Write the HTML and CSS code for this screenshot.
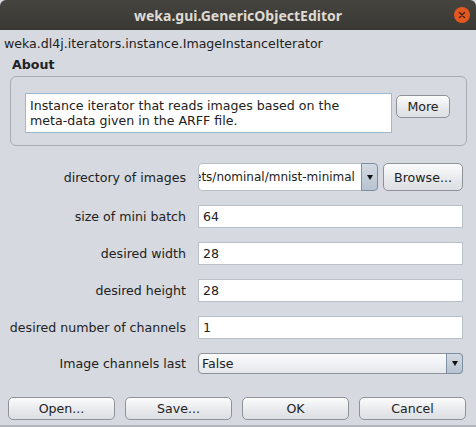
FILE: index.html
```html
<!DOCTYPE html>
<html lang="en">

<head>
    <meta charset="UTF-8">
    <title>weka.gui.GenericObjectEditor</title>
    <link rel="stylesheet" href="styles.css">
</head>

<body>
    <div class="editor-window">
        <div class="title-bar">
            <span class="title-text">weka.gui.GenericObjectEditor</span>
            <span class="close-button">
                <svg width="16" height="16" viewBox="0 0 16 16">
                    <circle cx="8" cy="8" r="8" fill="#e4561f"/>
                    <path d="M5.5 5.5 L10.5 10.5 M10.5 5.5 L5.5 10.5" stroke="#3a2218" stroke-width="1.3" stroke-linecap="round"/>
                </svg>
            </span>
        </div>

        <div class="class-name">weka.dl4j.iterators.instance.ImageInstanceIterator</div>

        <div class="about-title">About</div>
        <div class="about-panel">
            <div class="about-text">Instance iterator that reads images based on the<br>meta-data given in the ARFF file.</div>
            <button class="swing-button more-button">More</button>
        </div>

        <div class="property-grid">
            <span class="prop-label">directory of images</span>
            <div class="file-row">
                <div class="combo combo-path">
                    <span class="combo-value path-value">ets/nominal/mnist-minimal</span>
                    <span class="combo-arrow"><span class="arrow-glyph"></span></span>
                </div>
                <button class="swing-button browse-button">Browse...</button>
            </div>

            <span class="prop-label">size of mini batch</span>
            <div class="text-field">64</div>

            <span class="prop-label">desired width</span>
            <div class="text-field">28</div>

            <span class="prop-label">desired height</span>
            <div class="text-field">28</div>

            <span class="prop-label">desired number of channels</span>
            <div class="text-field">1</div>

            <span class="prop-label">Image channels last</span>
            <div class="combo combo-select">
                <span class="combo-value">False</span>
                <span class="combo-arrow"><span class="arrow-glyph"></span></span>
            </div>
        </div>

        <div class="button-bar">
            <button class="swing-button">Open...</button>
            <button class="swing-button">Save...</button>
            <button class="swing-button">OK</button>
            <button class="swing-button">Cancel</button>
        </div>
    </div>
</body>

</html>
```

FILE: styles.css
```css
:root {
    --window-bg: #d6d9df;
    --title-bg: #3c3b37;
    --field-border: #b9bfc7;
    --button-border: #8e939a;
    --text-color: #222222;
}

body {
    margin: 0;
    font-family: 'DejaVu Sans', sans-serif;
    font-size: 12.6px;
    color: var(--text-color);
    background-color: var(--window-bg);
}

.editor-window {
    width: 476px;
    height: 427px;
    box-sizing: border-box;
    border-bottom: 2px solid #b3b6bc;
    overflow: hidden;
}

.title-bar {
    height: 30px;
    background: linear-gradient(#45443f, #393834);
    border-radius: 6px 6px 0 0;
    display: flex;
    align-items: center;
    justify-content: center;
    position: relative;
}

.title-text {
    font-family: 'Noto Sans', sans-serif;
    font-weight: bold;
    font-size: 14px;
    color: #dfdbd2;
}

.close-button {
    position: absolute;
    right: 6px;
    top: 7px;
    height: 16px;
}

.class-name {
    padding: 6px 0 0 4px;
    height: 16px;
    line-height: 16px;
}

.about-title {
    margin: 5px 0 0 12px;
    font-weight: bold;
    height: 16px;
    line-height: 16px;
}

.about-panel {
    margin: 3px 9px 0 10px;
    height: 70px;
    box-sizing: border-box;
    border: 1px solid #a9adb3;
    border-radius: 6px;
    display: flex;
    align-items: flex-start;
    padding: 16px 0 0 14px;
    gap: 4px;
}

.about-text {
    width: 367px;
    height: 40px;
    box-sizing: border-box;
    background-color: white;
    border: 1px solid #9db9d2;
    padding: 4px 4px;
    line-height: 15px;
}

.swing-button {
    font-family: 'DejaVu Sans', sans-serif;
    font-size: 12.6px;
    color: var(--text-color);
    background: linear-gradient(#fcfcfc, #e6e8eb 60%, #dcdfe3);
    border: 1px solid var(--button-border);
    border-radius: 5px;
    padding: 0;
    height: 23px;
}

.more-button {
    width: 54px;
    margin-top: 2px;
}

.property-grid {
    display: grid;
    grid-template-columns: 186px 265px;
    column-gap: 12px;
    row-gap: 14px;
    align-items: center;
    margin-top: 17px;
}

.prop-label {
    text-align: right;
}

.file-row {
    display: flex;
    gap: 5px;
}

.combo {
    display: flex;
    box-sizing: border-box;
    border: 1px solid var(--field-border);
    background-color: white;
}

.combo-path {
    width: 180px;
    height: 28px;
    border-radius: 4px 5px 5px 4px;
}

.combo-select {
    height: 21px;
    border-color: var(--button-border);
    border-radius: 4px;
    background: linear-gradient(#fbfbfc, #e4e7eb);
}

.combo-value {
    flex-grow: 1;
    min-width: 0;
    display: flex;
    align-items: center;
    padding-left: 3px;
    overflow: hidden;
    white-space: nowrap;
}

.path-value {
    display: block;
    font-size: 12px;
    line-height: 26px;
    padding: 0;
    text-indent: -5px;
}

.combo-arrow {
    width: 15px;
    flex-shrink: 0;
    display: flex;
    align-items: center;
    justify-content: center;
    background: linear-gradient(#d2dae3, #b7c3d0);
    border: 1px solid #7f8fa2;
    border-radius: 0 4px 4px 0;
    margin: -1px -1px -1px 0;
}

.arrow-glyph {
    width: 0;
    height: 0;
    border-left: 3.5px solid transparent;
    border-right: 3.5px solid transparent;
    border-top: 5px solid #111;
}

.browse-button {
    width: 80px;
    height: 28px;
}

.text-field {
    height: 23px;
    box-sizing: border-box;
    border: 1px solid var(--field-border);
    background-color: white;
    padding-left: 4px;
    display: flex;
    align-items: center;
}

.button-bar {
    display: grid;
    grid-template-columns: repeat(4, 107px);
    column-gap: 10px;
    margin: 23px 0 0 8px;
}
```
